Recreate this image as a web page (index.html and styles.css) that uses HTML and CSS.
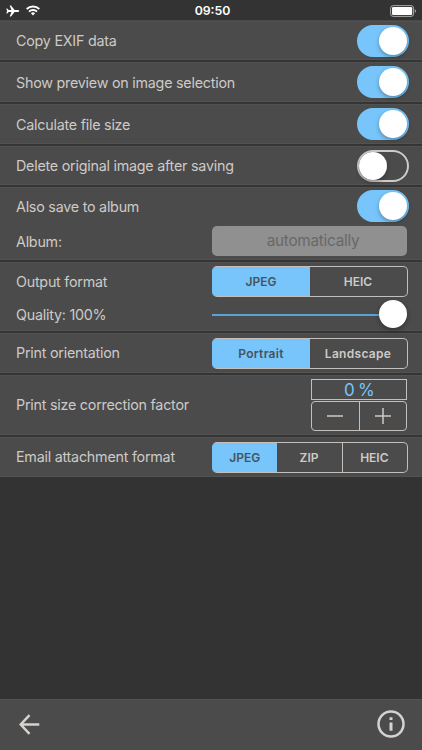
FILE: index.html
```html
<!DOCTYPE html>
<html lang="en">
<head>
  <meta charset="utf-8">
  <title>Settings</title>
  <meta name="viewport" content="width=device-width, initial-scale=1">
  <link rel="stylesheet" href="styles.css">
</head>
<body>
  <header class="statusbar">
    <div class="signal">
      <svg width="14" height="12" viewBox="0 0 14 12"><path fill="#fff" d="M13.2 6c0-.6-.6-.9-1.4-.9H8.6L5 .6H3.700l1.700 4.500H2.600L1.300 3.500H.3l.8 2.500-.8 2.500h1l1.300-1.600h2.800l-1.700 4.500H5l3.600-4.500h3.200c.8 0 1.400-.3 1.400-.9z"/></svg>
      <svg width="14" height="11" viewBox="0 0 14 11"><g fill="none" stroke="#fff" stroke-width="1.900"><path d="M.7 4a9 9 0 0 1 12.600 0"/><path d="M3 6.600a5.700 5.700 0 0 1 8 0"/></g><path fill="#fff" d="M4.900 8.300a3 3 0 0 1 4.200 0L7 10.500z"/></svg>
    </div>
    <span class="clock">09:50</span>
    <svg class="battery" width="27" height="12" viewBox="0 0 27 12"><rect x=".6" y=".6" width="23" height="10.800" rx="2.600" fill="none" stroke="#aaa"/><rect x="2" y="2" width="20.200" height="8" rx="1.300" fill="#fff"/><path fill="#aaa" d="M24.800 4.200c1.600.5 1.600 3.100 0 3.600z"/></svg>
  </header>

  <main class="settings">
    <section class="row r1">
      <span class="label">Copy EXIF data</span>
      <span class="switch on"></span>
    </section>
    <section class="row">
      <span class="label">Show preview on image selection</span>
      <span class="switch on"></span>
    </section>
    <section class="row">
      <span class="label">Calculate file size</span>
      <span class="switch on"></span>
    </section>
    <section class="row r1">
      <span class="label">Delete original image after saving</span>
      <span class="switch"></span>
    </section>
    <section class="row album">
      <div class="line">
        <span class="label">Also save to album</span>
        <span class="switch on"></span>
      </div>
      <div class="line">
        <span class="label">Album:</span>
        <span class="field">automatically</span>
      </div>
    </section>
    <section class="row output">
      <div class="line">
        <span class="label">Output format</span>
        <div class="segments"><span class="active">JPEG</span><span>HEIC</span></div>
      </div>
      <div class="line">
        <span class="label">Quality: 100%</span>
        <div class="slider"><span class="thumb"></span></div>
      </div>
    </section>
    <section class="row orientation">
      <span class="label">Print orientation</span>
      <div class="segments spaced"><span class="active">Portrait</span><span>Landscape</span></div>
    </section>
    <section class="row factor">
      <span class="label">Print size correction factor</span>
      <div class="correction">
        <div class="value">0 %</div>
        <div class="stepper">
          <span><svg width="16" height="16"><path d="M0 8h16"/></svg></span>
          <span><svg width="16" height="16"><path d="M0 8h16M8 0v16"/></svg></span>
        </div>
      </div>
    </section>
    <section class="row last">
      <span class="label">Email attachment format</span>
      <div class="segments"><span class="active">JPEG</span><span>ZIP</span><span>HEIC</span></div>
    </section>
  </main>

  <footer class="toolbar">
    <svg width="21" height="21" viewBox="0 0 21 21"><path d="M20.300 10.500H2M10.500 1.200L1.700 10.500l8.800 9.300" fill="none" stroke="#d5d2cf" stroke-width="2.500"/></svg>
    <svg width="28" height="28" viewBox="0 0 28 28"><circle cx="14" cy="14" r="12.500" fill="none" stroke="#d5d2cf" stroke-width="2.500"/><path fill="#d5d2cf" d="M12.500 7.300h3v2.800h-3zM12.500 12.500h3v8.300h-3z"/></svg>
  </footer>
</body>
</html>
```
FILE: styles.css
```css
*, *::before, *::after { box-sizing: border-box; }
html, body { margin: 0; height: 100%; }
body {
  display: flex; flex-direction: column;
  overflow: hidden;
  background: #333;
  color: #cdcac7;
  font-family: Inter, "Liberation Sans", sans-serif;
  font-size: 14.3px;
}
svg { display: block; }

/* Status bar */
.statusbar {
  display: grid; grid-template-columns: 1fr auto 1fr; align-items: center;
  height: 20px; padding: 1px 5px 0 6px;
  color: #fff;
}
.signal { display: flex; align-items: center; gap: 6px; }
.clock { padding-left: 2px; font-size: 12.3px; font-weight: 600; }
.battery { justify-self: end; }

/* Rows */
.settings { border-top: 1px solid #484848; }
.row {
  display: flex; align-items: center; justify-content: space-between;
  height: 42px; padding: 0 13px 0 16px;
  background: #4b4b4b;
  border-bottom: 2px solid #353535;
  box-shadow: inset 0 1px #515151, inset 0 -1px #525252;
}
.r1 { height: 41px; }
.line { display: flex; align-items: center; justify-content: space-between; }
.album, .output { flex-direction: column; align-items: stretch; justify-content: flex-start; }
.album { height: 75px; padding-top: 3px; gap: 4px; }
.output { height: 71px; padding-top: 4px; gap: 3px; }
.factor { height: 62px; }
.last { height: 40px; border-bottom: 0; }
.label { white-space: nowrap; letter-spacing: -0.23px; }
.orientation .label, .factor .label, .last .label { padding-bottom: 2px; }

/* Controls */
.switch {
  display: flex; align-items: center;
  width: 52px; height: 32px; margin-right: 0.5px;
  border: 2px solid #cdcac7; border-radius: 16px;
}
.switch::before {
  content: ""; flex: none;
  width: 28px; height: 28px;
  border-radius: 50%; background: #fff;
  box-shadow: 0 2px 4px rgba(0, 0, 0, 0.3);
}
.switch.on { justify-content: flex-end; background: #77c5fa; border-color: #77c5fa; }
.field {
  width: 195px; height: 30px; margin-right: 2px; padding-left: 7px;
  border-radius: 5px; background: #909090; color: #686868;
  font-size: 15.3px; letter-spacing: -0.25px; line-height: 30px; text-align: center;
}
.segments {
  display: flex;
  width: 196px; height: 31px; margin-right: 1px;
  border: 1px solid #c4bfbb; border-left-color: #77c5fa; border-radius: 5px;
  overflow: hidden;
  font-size: 12px; font-weight: 600;
}
.segments span { flex: 1; display: flex; align-items: center; justify-content: center; padding-right: 1px; }
.segments span + span { border-left: 1px solid #c4bfbb; }
.segments .active { background: #77c5fa; color: #46535c; box-shadow: 0 -1px #77c5fa, 0 1px #77c5fa; }
.segments .active + span { border-left: 0; }
.spaced { letter-spacing: 0.3px; }
.slider {
  display: flex; align-items: center; justify-content: flex-end;
  width: 195px; height: 28px; margin-right: 2px;
  background: linear-gradient(#5ba3d3, #5ba3d3) 0 14px / 100% 2px no-repeat;
}
.thumb { width: 28px; height: 28px; border-radius: 50%; background: #fff; box-shadow: 0 2px 5px rgba(0, 0, 0, 0.35); }
.correction { width: 96px; margin-right: 2px; }
.value {
  height: 21px; margin-bottom: 1px;
  border: 1px solid #c4bfbb; color: #77c5fa;
  font-size: 17px; letter-spacing: -0.7px; line-height: 20px; text-align: center;
}
.stepper { display: flex; height: 30px; border: 1px solid #c4bfbb; border-radius: 4px; }
.stepper span { flex: 1; display: flex; align-items: center; justify-content: center; }
.stepper span + span { border-left: 1px solid #c4bfbb; }
.stepper path { stroke: #cdcac7; stroke-width: 1.5; }

.toolbar {
  display: flex; align-items: center; justify-content: space-between;
  height: 51px; margin-top: auto; padding: 0 17px 2px 19px;
  background: #4b4b4b; border-top: 1px solid #525252;
}
```
